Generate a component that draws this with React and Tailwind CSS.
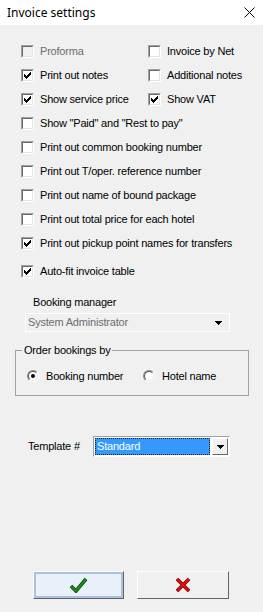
import React from 'react'

const font = "font-['Liberation_Sans',Arial,sans-serif]"

// classic 7x7 check glyph, one rect per pixel run
const checkRuns = [
  [6, 0, 1], [5, 1, 2], [0, 2, 1], [4, 2, 3], [0, 3, 2], [3, 3, 3], [0, 4, 5], [1, 5, 3], [2, 6, 1],
]

function CheckGlyph() {
  return (
    <svg width="7" height="7" viewBox="0 0 7 7" shapeRendering="crispEdges" className="block">
      {checkRuns.map(([x, y, w], i) => (
        <rect key={i} x={x} y={y} width={w} height="1" fill="#000" />
      ))}
    </svg>
  )
}

function Box({ checked, disabled }) {
  return (
    <span className="w-[13px] h-[13px] shrink-0 border border-t-[#a0a0a0] border-l-[#a0a0a0] border-b-white border-r-white">
      <span className={`flex items-center justify-center w-full h-full border border-t-[#696969] border-l-[#696969] border-b-[#e3e3e3] border-r-[#e3e3e3] ${disabled ? 'bg-[#f0f0f0]' : 'bg-white'}`}>
        {checked && <CheckGlyph />}
      </span>
    </span>
  )
}

function Check({ label, checked, disabled }) {
  return (
    <label className="flex items-center h-[24px] gap-[6px]">
      <Box checked={checked} disabled={disabled} />
      <span className={disabled ? 'text-[#6d6d6d]' : 'text-black'}>{label}</span>
    </label>
  )
}

function Radio({ label, checked }) {
  return (
    <label className="flex items-center gap-[7px]">
      <span className="w-[12px] h-[12px] shrink-0 rounded-full border border-t-[#8a8a8a] border-l-[#8a8a8a] border-b-white border-r-white">
        <span className="flex items-center justify-center w-full h-full rounded-full bg-white border border-t-[#505050] border-l-[#505050] border-b-[#e3e3e3] border-r-[#e3e3e3]">
          {checked && <span className="w-[4px] h-[4px] rounded-full bg-black" />}
        </span>
      </span>
      <span>{label}</span>
    </label>
  )
}

function Arrow() {
  return (
    <svg width="7" height="4" viewBox="0 0 7 4" shapeRendering="crispEdges" className="block">
      <rect x="0" y="0" width="7" height="1" fill="#000" />
      <rect x="1" y="1" width="5" height="1" fill="#000" />
      <rect x="2" y="2" width="3" height="1" fill="#000" />
      <rect x="3" y="3" width="1" height="1" fill="#000" />
    </svg>
  )
}

export default function App() {
  return (
    <div className={`w-[263px] h-[612px] bg-[#f0f0f0] flex flex-col text-[11px] leading-[13px] tracking-[-0.2px] text-black ${font}`}>
      {/* Title bar */}
      <div className="h-[25px] bg-white flex items-center justify-between pl-[7px] pr-[8px] shrink-0">
        <span className="text-[12px] tracking-normal font-['Noto_Sans',sans-serif] text-black">Invoice settings</span>
        <svg width="11" height="11" viewBox="0 0 11 11" className="block">
          <path d="M0.5 0.5 L10.5 10.5 M10.5 0.5 L0.5 10.5" stroke="#000" strokeWidth="1" />
        </svg>
      </div>

      {/* Options */}
      <div className="flex flex-col pt-[14px] pl-[21px]">
        <div className="grid grid-cols-[127px_1fr]">
          <Check label="Proforma" disabled />
          <Check label="Invoice by Net" />
          <Check label="Print out notes" checked />
          <Check label="Additional notes" />
          <Check label="Show service price" checked />
          <Check label="Show VAT" checked />
        </div>
        <Check label={'Show "Paid" and "Rest to pay"'} />
        <Check label="Print out common booking number" />
        <Check label="Print out T/oper. reference number" />
        <Check label="Print out name of bound package" />
        <Check label="Print out total price for each hotel" />
        <Check label="Print out pickup point names for transfers" checked />
        <div className="mt-[4px]">
          <Check label="Auto-fit invoice table" checked />
        </div>
      </div>

      {/* Booking manager */}
      <div className="mt-[13px] pl-[33px] h-[13px]">Booking manager</div>
      <div className="mt-[4px] ml-[25px] w-[205px] h-[19px] flex items-center justify-between pl-[2px] pr-[7px] border border-white text-[#6d6d6d]">
        <span>System Administrator</span>
        <Arrow />
      </div>

      {/* Order bookings by */}
      <div className="relative mt-[18px] ml-[15px] w-[234px] h-[46px] border border-[#a0a0a0] grid grid-cols-[116px_1fr] items-center pl-[11px] pt-[6px]">
        <span className="absolute -top-[7px] left-[6px] px-[2px] bg-[#f0f0f0]">Order bookings by</span>
        <Radio label="Booking number" checked />
        <Radio label="Hotel name" />
      </div>

      {/* Template */}
      <div className="mt-[40px] flex items-center pl-[28px]">
        <span className="w-[65px]">Template #</span>
        <div className="w-[137px] h-[21px] border border-t-[#a0a0a0] border-l-[#a0a0a0] border-b-white border-r-white">
          <div className="w-full h-full bg-white flex items-center p-[1px] gap-[2px]">
            <div className="flex-1 h-full bg-[#3399ff] border border-dotted border-[#1a1a1a] flex items-center pl-[1px] text-white">
              Standard
            </div>
            <div className="w-[16px] h-full bg-[#f0f0f0] border border-t-white border-l-white border-b-[#696969] border-r-[#696969] flex items-center justify-center">
              <Arrow />
            </div>
          </div>
        </div>
      </div>

      {/* Buttons */}
      <div className="mt-auto pb-[13px] flex pl-[33px] gap-[13px]">
        <button className="w-[91px] h-[28px] border border-t-white border-l-white border-b-[#646464] border-r-[#646464]">
          <span className="flex items-center justify-center w-full h-full border-2 border-[#a9c1dd] bg-[#e8f0f9]">
            <svg width="19" height="16" viewBox="0 0 19 16" className="block">
              <path d="M2 9 L7 14 L17 2" fill="none" stroke="#0b4d0b" strokeWidth="3.6" strokeLinejoin="miter" />
              <path d="M2 9 L7 14 L17 2" fill="none" stroke="#1f8a1f" strokeWidth="2" strokeLinejoin="miter" />
            </svg>
          </span>
        </button>
        <button className="w-[92px] h-[28px] border border-t-white border-l-white border-b-[#646464] border-r-[#646464] bg-[#f0f0f0] flex items-center justify-center">
          <svg width="16" height="16" viewBox="0 0 16 16" className="block">
            <path d="M2 2 L14 14 M14 2 L2 14" fill="none" stroke="#7a0000" strokeWidth="3.6" />
            <path d="M2 2 L14 14 M14 2 L2 14" fill="none" stroke="#e01010" strokeWidth="2.2" />
          </svg>
        </button>
      </div>
    </div>
  )
}
